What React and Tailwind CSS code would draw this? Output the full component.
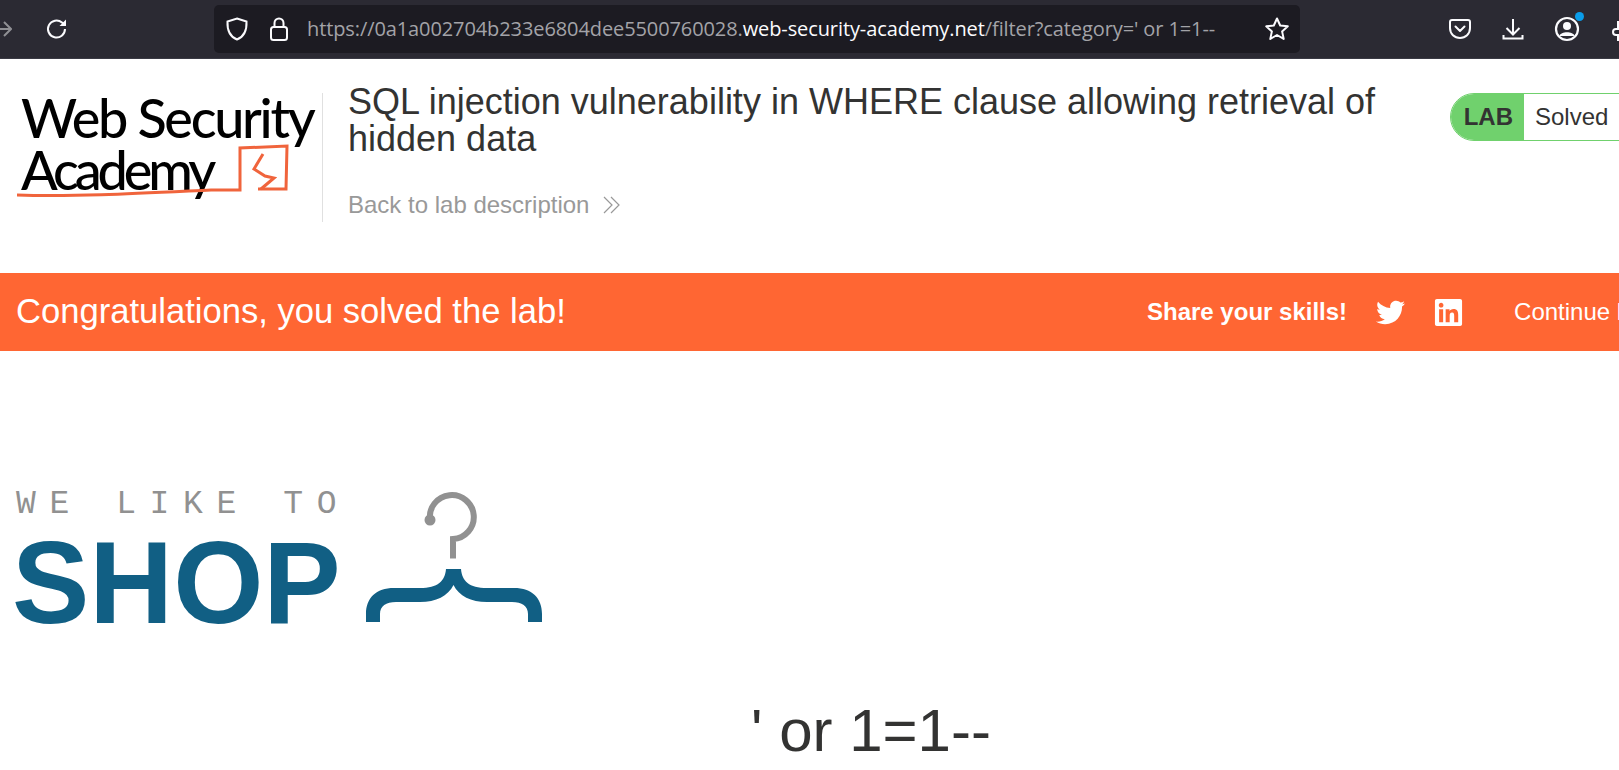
import { FaTwitter, FaLinkedin } from 'react-icons/fa';

const sans = "font-['Liberation_Sans',Arial,sans-serif]";

function Toolbar() {
  return (
    <div className="flex h-[59px] items-center border-b border-[#3a3a44] bg-[#2b2a33] text-[#fbfbfe]">
      <svg width="12" height="20" viewBox="0 0 12 20" fill="none" stroke="#8f8f94" strokeWidth="2" className="mr-[33px]">
        <path d="M-6 10h16M4 3l7 7-7 7" />
      </svg>
      <svg width="24" height="24" viewBox="0 0 24 24" fill="none" stroke="currentColor" strokeWidth="2" className="mr-[145px]">
        <path d="M20 12a8.500 8.500 0 1 1-3-6.500L20 8" />
        <path d="M21 2.500V9h-6.500z" fill="currentColor" stroke="none" />
      </svg>
      <div className="flex h-[48px] w-[1086px] shrink-0 items-center rounded-[5px] bg-[#1c1b22] pl-[11px] pr-[10px]">
        <svg width="24" height="26" viewBox="0 0 24 26" fill="none" stroke="currentColor" strokeWidth="2" className="mr-[20px]">
          <path d="M12 2.500l9.500 3c.4 8.500-2 15-9.500 18C4.500 20.500 2.100 14 2.500 5.500z" />
        </svg>
        <svg width="20" height="26" viewBox="0 0 20 26" fill="none" stroke="currentColor" strokeWidth="2" className="mr-[18px]">
          <rect x="2" y="11" width="16" height="13" rx="2.500" />
          <path d="M5.500 11V7a4.500 4.500 0 0 1 9 0v4" />
        </svg>
        <div className="flex-1 whitespace-nowrap font-['Open_Sans',sans-serif] text-[20px] tracking-[-0.1px] text-[#a3a3a8]">
          https://0a1a002704b233e6804dee5500760028.<span className="text-[#fbfbfe]">web-security-academy.net</span>/filter?category=' or 1=1--
        </div>
        <svg width="26" height="26" viewBox="0 0 26 26" fill="none" stroke="currentColor" strokeWidth="2" strokeLinejoin="round">
          <path d="M13 2.500l3.200 7 7.600.8-5.700 5.100 1.600 7.500-6.700-3.900-6.700 3.900 1.600-7.500-5.700-5.100 7.600-.8z" />
        </svg>
      </div>
      <div className="ml-[148px] flex items-center gap-[29px]">
        <svg width="24" height="24" viewBox="0 0 24 24" fill="none" stroke="currentColor" strokeWidth="2" strokeLinejoin="round">
          <path d="M4 3h16a2 2 0 0 1 2 2v6c0 6-4.500 10-10 10S2 17 2 11V5a2 2 0 0 1 2-2z" />
          <path d="M7.500 9.500l4.500 4.500 4.500-4.500" strokeLinecap="round" />
        </svg>
        <svg width="24" height="24" viewBox="0 0 24 24" fill="none" stroke="currentColor" strokeWidth="2">
          <path d="M12 2v15M5.500 11l6.500 6.500 6.500-6.500M2.500 18v3.500h19V18" />
        </svg>
        <div className="relative h-[26px] w-[26px]">
          <svg width="26" height="26" viewBox="0 0 26 26" fill="none" stroke="currentColor" strokeWidth="2.200">
            <circle cx="13" cy="13" r="11" />
            <circle cx="13" cy="10" r="4" fill="currentColor" stroke="none" />
            <path d="M5.500 20c1-5 14-5 15 0" fill="currentColor" stroke="none" />
          </svg>
          <span className="absolute right-[-4px] top-[-4px] h-[9px] w-[9px] rounded-full bg-[#0a9dea]" />
        </div>
        <svg width="24" height="24" viewBox="0 0 24 24" fill="none" stroke="currentColor" strokeWidth="2">
          <path d="M9 5h3V3a3 3 0 0 1 6 0v2h4v6h-2a3 3 0 0 0 0 6h2v6h-13v-5h-2a3 3 0 0 1 0-6h2z" />
        </svg>
      </div>
    </div>
  );
}

function AcademyLogo() {
  return (
    <div className="relative mt-[9px] h-[110px] w-[306px] shrink-0 font-['Lato',sans-serif] text-[54px] font-medium leading-[52px] text-black">
      <div className="ml-[4px] whitespace-nowrap tracking-[-2.300px]">Web Security</div>
      <div className="ml-[4px] whitespace-nowrap tracking-[-4.100px]">Academy</div>
      <svg width="300" height="70" viewBox="0 0 300 70" fill="none" stroke="#f0643c" strokeWidth="3" className="absolute left-0 top-[50px]">
        <path d="M0 53c60 2 130-2 194-5h29V6l47-2-1 43-28 0" />
        <path d="M246 12l-9 15 11 7 9 2-13 11" />
      </svg>
    </div>
  );
}

function Header() {
  return (
    <div className="flex h-[214px] items-start pl-[17px] pt-[24px]">
      <AcademyLogo />
      <div className="ml-[-1px] mt-[10px] h-[129px] border-l border-[#e0e0e0]" />
      <div className="ml-[25px] w-[1040px] shrink-0">
        <h2 className="text-[36px] leading-[37px] text-[#333332]">
          SQL injection vulnerability in WHERE clause allowing retrieval of hidden data
        </h2>
        <a className="mt-[34px] flex items-center gap-[13px] text-[24px] leading-[28px] text-[#999]">
          Back to lab description
          <svg width="19" height="20" viewBox="0 0 19 20" fill="none" stroke="#999" strokeWidth="1.200">
            <path d="M2 2l8 8-8 8M9 2l8 8-8 8" />
          </svg>
        </a>
      </div>
      <div className="ml-[62px] mt-[10px] flex h-[48px] w-[300px] shrink-0 items-stretch overflow-hidden rounded-l-[24px] border border-[#70d16d] text-[24px]">
        <div className="flex w-[73px] items-center justify-end bg-[#70d16d] pr-[11px] font-bold text-[#333332]">LAB</div>
        <div className="flex items-center pl-[11px] text-[#333332]">Solved</div>
      </div>
    </div>
  );
}

function Banner() {
  return (
    <div className="flex h-[78px] items-center bg-[#ff6633] pl-[16px] text-white">
      <div className="flex-1 text-[34.600px]">Congratulations, you solved the lab!</div>
      <div className="flex w-[595px] shrink-0 items-center">
        <b className="text-[24px]">Share your skills!</b>
        <FaTwitter className="ml-[29px] text-[29px]" />
        <FaLinkedin className="ml-[28px] text-[31px]" />
        <span className="ml-[50px] whitespace-nowrap text-[24px]">Continue learning</span>
      </div>
    </div>
  );
}

function ShopLogo() {
  return (
    <div className="ml-[16px] mt-[137px] flex items-end">
      <div className="w-[340px]">
        <div className="whitespace-nowrap font-['Liberation_Mono',monospace] text-[33px] leading-[34px] tracking-[13.600px] text-[#919191]">WE LIKE TO</div>
        <div className="ml-[-4px] mt-[8px] text-[116px] font-bold leading-[106px] text-[#115f84]">SHOP</div>
      </div>
      <svg width="184" height="138" viewBox="0 0 184 138" fill="none" className="mb-[10px] ml-[6px]">
        <path d="M68 32A22 22 0 1 1 91 51V70.500" stroke="#919191" strokeWidth="6" />
        <circle cx="68" cy="32" r="5.500" fill="#919191" />
        <path d="M84 81h15c1 12 8 19 26 19h27c18 0 28 10 28 26v8h-14v-8c0-8-6-12-16-12h-25c-16 0-28-6-33.500-17-5.500 11-17.500 17-33.500 17h-24c-10 0-16 4-16 12v8H4v-8c0-16 10-26 28-26h26c18 0 25-7 26-19z" fill="#115f84" />
      </svg>
    </div>
  );
}

export default function App() {
  return (
    <div className="h-[770px] w-[1619px] overflow-hidden bg-white">
      <div className={`w-[1742px] ${sans}`}>
        <Toolbar />
        <Header />
        <Banner />
        <ShopLogo />
        <h1 className="mt-[60px] text-center text-[60px] leading-[69px] text-[#333332]">' or 1=1--</h1>
      </div>
    </div>
  );
}
